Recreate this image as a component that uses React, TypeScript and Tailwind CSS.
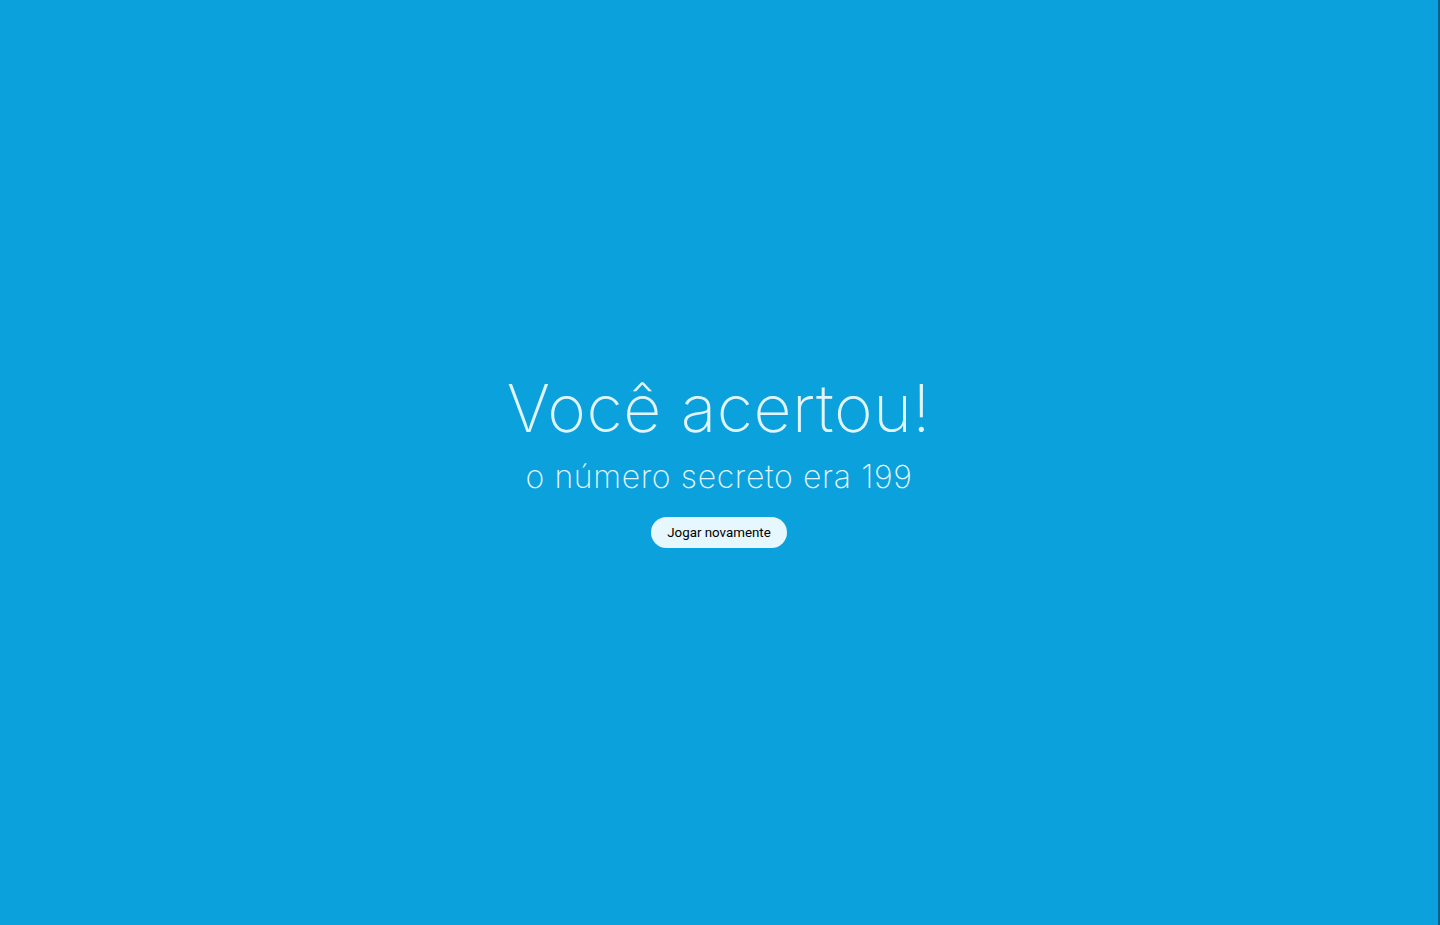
export default function App() {
  return (
    <div className="flex h-[925px] w-full border-r-2 border-[#0b5f82] bg-[#0ba1dc]">
      <main className="flex flex-1 flex-col items-center justify-center pb-[2px]">
        <h1 className="font-['Inter',sans-serif] text-[66px] font-extralight leading-none tracking-[0.008em] text-[#e1f5fe]">
          Você acertou!
        </h1>
        <h2 className="mt-[20px] font-['Inter',sans-serif] text-[32px] font-extralight leading-none tracking-[0.02em] text-[#e1f5fe]">
          o número secreto era 199
        </h2>
        <button className="mt-[24px] h-[31px] w-[136px] rounded-full bg-[#e6f7fd] font-['Roboto',sans-serif] text-[13.33px] text-black">
          Jogar novamente
        </button>
      </main>
    </div>
  );
}
